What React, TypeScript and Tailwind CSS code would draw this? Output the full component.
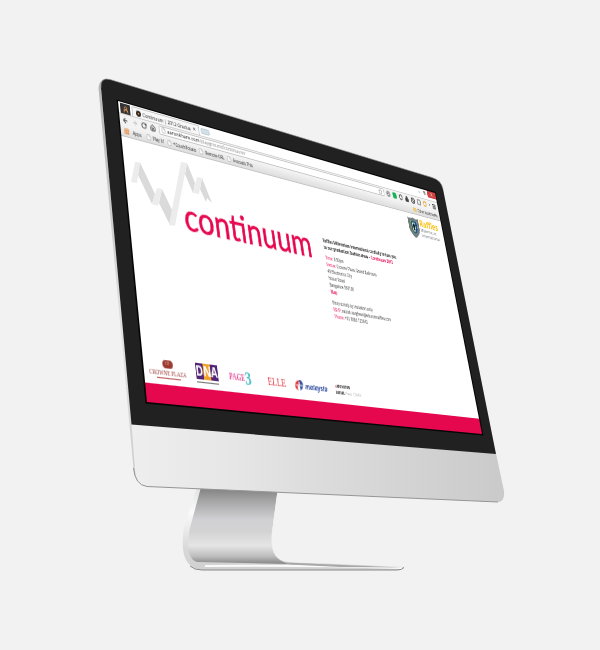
import React from "react";
import {
  ArrowLeft, ArrowRight, RotateCw, Home, File, Star, Globe, Shield, Lock,
  Ban, Square, Menu, Folder, Minus, Copy, X, Grid3x3, UserRound,
} from "lucide-react";

type Point = [number, number];

const SCREEN_WIDTH = 480;
const SCREEN_HEIGHT = 270;

// Top left, top right, bottom right and bottom left of the display glass.
const GLASS: [Point, Point, Point, Point] = [
  [118, 101],
  [435, 193],
  [482, 434],
  [147, 402],
];

function projectTo([p0, p1, p2, p3]: [Point, Point, Point, Point]) {
  const d1 = [p1[0] - p2[0], p1[1] - p2[1]];
  const d2 = [p3[0] - p2[0], p3[1] - p2[1]];
  const s = [p0[0] - p1[0] + p2[0] - p3[0], p0[1] - p1[1] + p2[1] - p3[1]];
  const det = d1[0] * d2[1] - d1[1] * d2[0];
  const g = (s[0] * d2[1] - s[1] * d2[0]) / det;
  const h = (d1[0] * s[1] - d1[1] * s[0]) / det;
  const w = SCREEN_WIDTH;
  const t = SCREEN_HEIGHT;
  const m = [
    (p1[0] - p0[0] + g * p1[0]) / w, (p1[1] - p0[1] + g * p1[1]) / w, 0, g / w,
    (p3[0] - p0[0] + h * p3[0]) / t, (p3[1] - p0[1] + h * p3[1]) / t, 0, h / t,
    0, 0, 1, 0,
    p0[0], p0[1], 0, 1,
  ];
  return `matrix3d(${m.join(",")})`;
}

function Computer() {
  return (
    <svg className="absolute inset-0" width="600" height="650" viewBox="0 0 600 650" aria-hidden="true">
      <defs>
        <linearGradient id="chin" x1="0" x2="1">
          <stop offset="0" stopColor="#eeeeee" />
          <stop offset="0.25" stopColor="#e6e7e6" />
          <stop offset="0.5" stopColor="#dbdcdb" />
          <stop offset="1" stopColor="#cacaca" />
        </linearGradient>
        <linearGradient id="side" x1="0" x2="1">
          <stop offset="0" stopColor="#b4b4b8" />
          <stop offset="0.5" stopColor="#e3e3e6" />
          <stop offset="1" stopColor="#b6b6ba" />
        </linearGradient>
        <linearGradient id="neck" x1="0" x2="0" y1="0" y2="1">
          <stop offset="0" stopColor="#7e7e7e" />
          <stop offset="0.18" stopColor="#a5a5a6" />
          <stop offset="0.42" stopColor="#d0d0d4" />
          <stop offset="0.58" stopColor="#d3d3d4" />
          <stop offset="0.76" stopColor="#e5e5e5" />
          <stop offset="0.9" stopColor="#bdbdbd" />
          <stop offset="1" stopColor="#858585" />
        </linearGradient>
        <linearGradient id="neckEdge" x1="0" x2="0" y1="0" y2="1">
          <stop offset="0" stopColor="#dfe2e2" />
          <stop offset="0.3" stopColor="#fafafa" />
          <stop offset="0.75" stopColor="#d8d8d8" />
          <stop offset="1" stopColor="#d0d0d0" />
        </linearGradient>
        <filter id="soft"><feGaussianBlur stdDeviation="2 0.7" /></filter>
      </defs>

      <path d="M180 570H395" stroke="#8a8a8a" strokeWidth="1.5" filter="url(#soft)" />
      <path d="M197 487 184 528C181 545 182 566 198 569L202 570H398Q403 570 404 567L290 562 278 489Z" fill="url(#neckEdge)" />
      <path d="M205 566Q300 565 402 568" stroke="#fafafa" strokeWidth="2" fill="none" />
      <path d="M201 487 190 528C187 543 187 559 197 562L290 564C274 561 270 550 272 532L278 487Z" fill="url(#neck)" />
      <path d="M278 487 272 532C270 550 274 560 288 562L320 563.5 360 480Z" fill="#f2f2f2" />
      <path d="M284 562.5 403 567.5 340 567 290 564.5Z" fill="#a8a8a8" />
      <path d="M190 566Q194 570 202 570H397Q402 570 404 567.5" stroke="#808080" strokeWidth="0.9" fill="none" />

      <path d="M98.500 88Q99 79 107 78.500L101 90 132 424 137 474 147 485.500Q135 483 133.500 469Z" fill="url(#side)" />
      <path d="M131.500 424 496 453.500 504 491Q505 502 498 502L147 486.500Q136 485 135 470Z" fill="url(#chin)" />
      <path d="M133.500 468Q135 485 147 486.500L498 502" stroke="#959595" strokeWidth="1" fill="none" />
      <path d="M101 88Q100 77 110 79.500L432 177.500Q441 180 443 189L496 454 131.500 424.500Z" fill="#212121" />
      <path d="M101 88Q100 77 110 79.500L432 177.500Q441 180 443 189" fill="none" stroke="#8f8f8f" strokeWidth="0.600" />
      <path d="M116.500 99.500 435.500 192 483.500 435.500 145.500 403.500Z" fill="#050505" />
    </svg>
  );
}

function TabStrip() {
  return (
    <div className="flex h-[22px] items-end justify-between bg-white pl-1">
      <div className="flex items-end gap-1">
        <button aria-label="Profile" className="flex h-5 w-6 items-center justify-center bg-[#353535] text-[#e8a05c]">
          <UserRound size={14} strokeWidth={3} />
        </button>
        <button className="flex h-5 items-center gap-1 rounded-t border border-b-0 border-[#c4c4c4] bg-[#f8f8f8] pr-2 pl-2 text-[10px] leading-4 text-[#222]">
          <span className="flex size-3 items-center justify-center rounded-full bg-[#222]">
            <span className="size-1 rounded-full bg-[#f39a32]" />
          </span>
          Continuum | 2012 Gradua
          <X size={9} strokeWidth={3} />
        </button>
        <button aria-label="New tab" className="h-3 w-6 self-center rounded-sm border border-[#bccbd5] bg-[#d4e0e8]" />
      </div>
      <div className="flex h-full items-start text-[#333]">
        <button aria-label="Minimize" className="flex h-4 w-5 items-center justify-center"><Minus size={9} strokeWidth={3} /></button>
        <button aria-label="Restore" className="flex h-4 w-5 items-center justify-center"><Copy size={9} strokeWidth={3} /></button>
        <button aria-label="Close" className="flex h-4 w-8 items-center justify-center bg-[#d04444] text-white"><X size={11} strokeWidth={3} /></button>
      </div>
    </div>
  );
}

function Toolbar() {
  return (
    <div className="flex h-[23px] items-center gap-2 border-t border-[#cfcfcf] bg-[#f3f3f3] pr-2 pl-[6px] text-[#444]">
      <button aria-label="Back"><ArrowLeft size={15} strokeWidth={3} /></button>
      <button aria-label="Forward" className="text-[#c2c2c2]"><ArrowRight size={14} strokeWidth={3} /></button>
      <button aria-label="Reload"><RotateCw size={14} strokeWidth={3} /></button>
      <button aria-label="Home"><Home size={14} strokeWidth={3} /></button>
      <div className="flex h-[19px] grow items-center rounded-sm border border-[#c5c5c5] bg-white px-1 text-[11px] leading-4">
        <File size={12} className="mr-1 text-[#999]" />
        <label htmlFor="address" className="text-[#222]">aaronkhare.com</label>
        <input id="address" defaultValue="/playground/continuum/" className="min-w-0 grow bg-transparent text-[#888] outline-none" />
        <button aria-label="Bookmark this page" className="text-[#999]"><Star size={14} /></button>
      </div>
      <button aria-label="Web"><Globe size={14} className="text-[#888]" strokeWidth={3} /></button>
      <button aria-label="Notes" className="size-[14px] rounded-sm bg-[#18b456]" />
      <button aria-label="Protection"><Shield size={14} strokeWidth={4} /></button>
      <button aria-label="Privacy"><Lock size={14} strokeWidth={3} className="fill-[#444]" /></button>
      <button aria-label="Block"><Ban size={14} strokeWidth={4} /></button>
      <button aria-label="Window"><Square size={14} strokeWidth={3} /></button>
      <button aria-label="Warnings" className="text-[#eeb245]"><Shield size={14} strokeWidth={5} /></button>
      <button aria-label="Extension" className="size-1 rounded-full bg-[#777]" />
      <button aria-label="Menu"><Menu size={15} strokeWidth={4} /></button>
    </div>
  );
}

const BOOKMARKS = ["Play It!", "+CouchPotato", "Remote URL", "Avocado This"];

function BookmarksBar() {
  return (
    <nav className="flex h-[23px] items-center gap-2 border-b border-[#c4c4c4] bg-gradient-to-b from-[#f3f3f3] to-[#dedede] px-2 text-[9px] leading-4 text-[#222]">
      <a href="#apps" className="mr-1 flex items-center gap-2"><Grid3x3 size={13} strokeWidth={3} className="text-[#e89355]" />Apps</a>
      {BOOKMARKS.map((name) => (
        <a key={name} href="#bookmark" className="flex items-center gap-1">
          <File size={12} className="fill-white text-[#999]" />
          {name}
        </a>
      ))}
      <a href="#other" className="ml-auto flex items-center gap-1">
        <Folder size={12} className="fill-[#f6cf74] text-[#e2ae45]" />
        Other bookmarks
      </a>
    </nav>
  );
}

function Raffles() {
  return (
    <div className="flex items-start gap-1">
      <svg width="38" height="48" viewBox="0 0 38 48" aria-hidden="true">
        <path d="M0 2Q10 5 19 1Q28 5 38 2V27Q35 40 19 48Q3 40 0 27Z" fill="#737a7c" />
        <path d="M8 9Q14 10 19 7Q25 10 31 9V27Q29 35 19 41Q9 35 8 27Z" fill="#b9c6c2" />
        <path d="M9 10 19 8V40Q10 34 9 27Z" fill="#246b4c" />
        <path d="M19 8 30 10V27Q29 34 19 40Z" fill="#1b4f88" />
        <path d="M15 14H23V30L19 33 15 30Z" fill="#1b2328" stroke="#dce6e2" strokeWidth="2" />
      </svg>
      <div className="font-['Open_Sans',sans-serif] text-[11px] leading-3 text-[#7d8288]">
        <div className="text-[20px] leading-5 font-bold text-[#f5c31c]">Raffles</div>
        <div>Millennium</div>
        <div>International</div>
      </div>
    </div>
  );
}

function Invitation() {
  return (
    <div className="font-['Open_Sans',sans-serif] text-[9px] leading-[14px] whitespace-nowrap text-[#333]">
      <h2 className="font-bold text-[#222]">
        Raffles Millennium International cordially invites you
        <br />
        to our graduation fashion show – <span className="text-[#e6084f]">Continuum 2012</span>
      </h2>
      <p className="mt-2"><span className="text-[#e6084f]">Time:</span> 6:30pm</p>
      <p><span className="text-[#e6084f]">Venue:</span> Crowne Plaza, Grand Ballroom</p>
      <p>43 Electronics City</p>
      <p>Hosur Road</p>
      <p>Bangalore 560100</p>
      <a href="#map" className="block font-bold text-[#e6084f]">Map</a>
      <p className="mt-2">Entry strictly by invitation only</p>
      <p><span className="text-[#e6084f]">RSVP:</span> rattish.varghese@educomraffles.com</p>
      <p><span className="text-[#e6084f]">Phone:</span> +91 9886 123642</p>
    </div>
  );
}

function Sponsors() {
  return (
    <div className="flex h-[52px] items-center pl-4 whitespace-nowrap">
      <div className="flex w-[78px] flex-col items-center font-['Liberation_Serif',serif] text-[#a03d3d]">
        <span className="flex h-[14px] w-6 items-center justify-center rounded-full bg-[#9b3a32] text-[9px] leading-3 text-[#e6b8a8]">CP</span>
        <span className="text-[11px] leading-4">CROWNE PLAZA</span>
        <span className="h-px w-14 bg-[#c06060]" />
      </div>
      <div className="ml-7 w-[54px]">
        <div className="flex font-['Open_Sans',sans-serif] text-[24px] leading-7 font-bold text-white">
          <span className="w-[18px] bg-[#512477] text-center">D</span>
          <span className="w-[18px] bg-[#f2a229] text-center">N</span>
          <span className="w-[18px] bg-[#512477] text-center">A</span>
        </div>
        <div className="mt-1 h-px bg-[#777]" />
      </div>
      <div className="ml-7 flex w-[58px] items-center font-['Liberation_Serif',serif] text-[#e65399]">
        <span className="text-[15px] leading-6 font-bold">PAGE</span>
        <span className="text-[32px] leading-8 font-bold text-[#47bcc6]">3</span>
      </div>
      <div className="ml-[42px] w-[50px] font-['Liberation_Serif',serif] text-[20px] leading-6 text-[#e03b45]">ELLE</div>
      <div className="ml-6 flex w-[92px] items-center gap-1 font-['Open_Sans',sans-serif] text-[#3450a0]">
        <svg width="24" height="24" viewBox="0 0 24 24" aria-hidden="true">
          <path d="M12 2C21 0 27 10 19 18L13 22V2Z" fill="#3450a0" />
          <path d="M12 3C4 3-1 10 1 18L8 22Q4 14 12 11Z" fill="#e13d42" />
          <path d="M3 12H22M12 6V21" stroke="#fff" strokeWidth="2" />
        </svg>
        <span className="text-[15px] leading-5 font-bold italic">malaysia</span>
      </div>
      <div className="ml-6 font-['Open_Sans',sans-serif] text-[8px] leading-[11px] font-bold text-[#222]">
        <div><span className="text-[#d31c3f]">●</span>MONSTER</div>
        <div>DIESEL <span className="font-normal text-[#999]">Pune | Delhi</span></div>
      </div>
    </div>
  );
}

function Ribbon() {
  return (
    <svg className="absolute inset-0" width="600" height="650" viewBox="0 0 600 650" aria-hidden="true">
      <path d="M140 162.500 155 194 152 204 138 175Z" fill="#dadada" />
      <path d="M162 189 173 212 170 225 159 203Z" fill="#dadada" />
      <path d="M187 163 195 183 193 193 185 174Z" fill="#dadada" />
      <path d="M202 178 212 203 207 198 206 202 200 189Z" fill="#dadada" />
      <path d="M135 162 140 162.500 137 183 131 182Z" fill="#ececec" />
      <path d="M157 188 162 189 158 206 152 204Z" fill="#ececec" />
      <path d="M181 162 187 163 175 226 169 225Z" fill="#ececec" />
      <path d="M197 177 202 178 199 194 193 193Z" fill="#ececec" />
    </svg>
  );
}

export default function App() {
  return (
    <main className="flex min-h-screen items-start justify-center overflow-hidden bg-[#f2f2f2] font-['Open_Sans','Noto_Sans',sans-serif]">
      <div className="relative h-[650px] w-[600px] shrink-0">
        <Computer />
        <div
          className="absolute top-0 left-0 h-[270px] w-[480px] origin-top-left overflow-hidden bg-white"
          style={{ transform: projectTo(GLASS) }}
        >
          <div className="flex h-[540px] w-[960px] flex-col [zoom:0.5]">
            <header>
              <TabStrip />
              <Toolbar />
              <BookmarksBar />
            </header>
            <section className="flex grow items-start">
              <h1 className="w-[526px] pt-[80px] pl-[136px] font-['Lato',sans-serif] text-[75px] leading-[90px] text-[#e6084f] [-webkit-text-stroke:1px_#e6084f]">continuum</h1>
              <div className="pt-[106px]"><Invitation /></div>
              <div className="ml-auto pt-2 pr-4"><Raffles /></div>
            </section>
            <Sponsors />
            <footer className="h-[33px] bg-[#e6084f]" />
          </div>
        </div>
        <Ribbon />
      </div>
    </main>
  );
}
